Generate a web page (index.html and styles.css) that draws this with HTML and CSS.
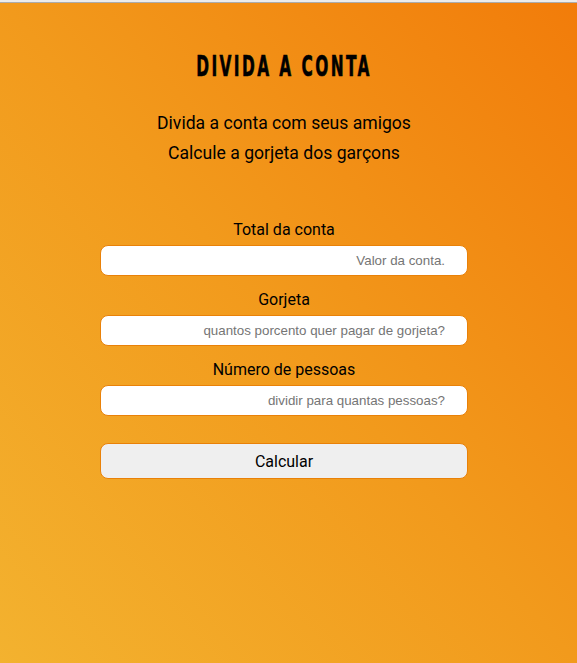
FILE: index.html
```html
<!DOCTYPE html>
<html lang="pt-BR">
<head>
<meta charset="utf-8">
<title>Divida a conta</title>
<link rel="stylesheet" href="styles.css">
</head>
<body>
<div class="topline"></div>
<main class="page">
  <div class="content">
    <h1 class="title">DIVIDA A CONTA</h1>
    <div class="intro">
      <p>Divida a conta com seus amigos</p>
      <p>Calcule a gorjeta dos garçons</p>
    </div>
    <form class="form">
      <div class="field">
        <label class="label" for="total">Total da conta</label>
        <input class="input" id="total" type="text" placeholder="Valor da conta.">
      </div>
      <div class="field">
        <label class="label" for="tip">Gorjeta</label>
        <input class="input" id="tip" type="text" placeholder="quantos porcento quer pagar de gorjeta?">
      </div>
      <div class="field">
        <label class="label" for="people">Número de pessoas</label>
        <input class="input" id="people" type="text" placeholder="dividir para quantas pessoas?">
      </div>
      <button class="button" type="button">Calcular</button>
    </form>
  </div>
</main>
</body>
</html>
```
FILE: styles.css
```css
html, body {
  margin: 0;
  padding: 0;
  height: 100%;
}
body {
  display: flex;
  flex-direction: column;
  background: linear-gradient(to top right, #f3b22f 0%, #f29a1c 50%, #f27c0a 100%);
  font-family: Roboto, "Liberation Sans", sans-serif;
  color: #000;
}
.topline {
  height: 2px;
  background: #ececec;
  border-bottom: 1px solid #acacac;
  flex: none;
}
.page {
  flex: 1;
  display: flex;
  justify-content: center;
  padding-right: 9px;
}
.content {
  width: 368px;
  display: flex;
  flex-direction: column;
  align-items: center;
}
.title {
  margin: 49px 0 0;
  font-family: "DejaVu Sans Condensed", "Liberation Sans", sans-serif;
  font-weight: 700;
  font-size: 28px;
  line-height: 30px;
  letter-spacing: 4px;
  -webkit-text-stroke: 0.6px #000;
  transform: scaleX(0.61);
}
.intro {
  margin-top: 26px;
  text-align: center;
  font-size: 17.6px;
}
.intro p {
  margin: 0;
  line-height: 30px;
}
.form {
  width: 100%;
  margin-top: 52px;
  display: flex;
  flex-direction: column;
  gap: 14px;
}
.field {
  display: flex;
  flex-direction: column;
  align-items: center;
  gap: 6px;
}
.label {
  font-size: 16px;
  line-height: 19px;
}
.input {
  box-sizing: border-box;
  width: 100%;
  height: 31px;
  border: 1px solid #e98108;
  border-radius: 8px;
  background: #fff;
  padding: 0 22px 0 10px;
  text-align: right;
  font-family: "Liberation Sans", Arial, sans-serif;
  font-size: 13.333px;
}
.input::placeholder {
  color: #757575;
}
.button {
  box-sizing: border-box;
  width: 100%;
  height: 36px;
  margin-top: 13px;
  border: 1px solid #e98108;
  border-radius: 8px;
  background: #efefef;
  font-family: Roboto, "Liberation Sans", sans-serif;
  font-size: 16px;
  color: #000;
}
```
